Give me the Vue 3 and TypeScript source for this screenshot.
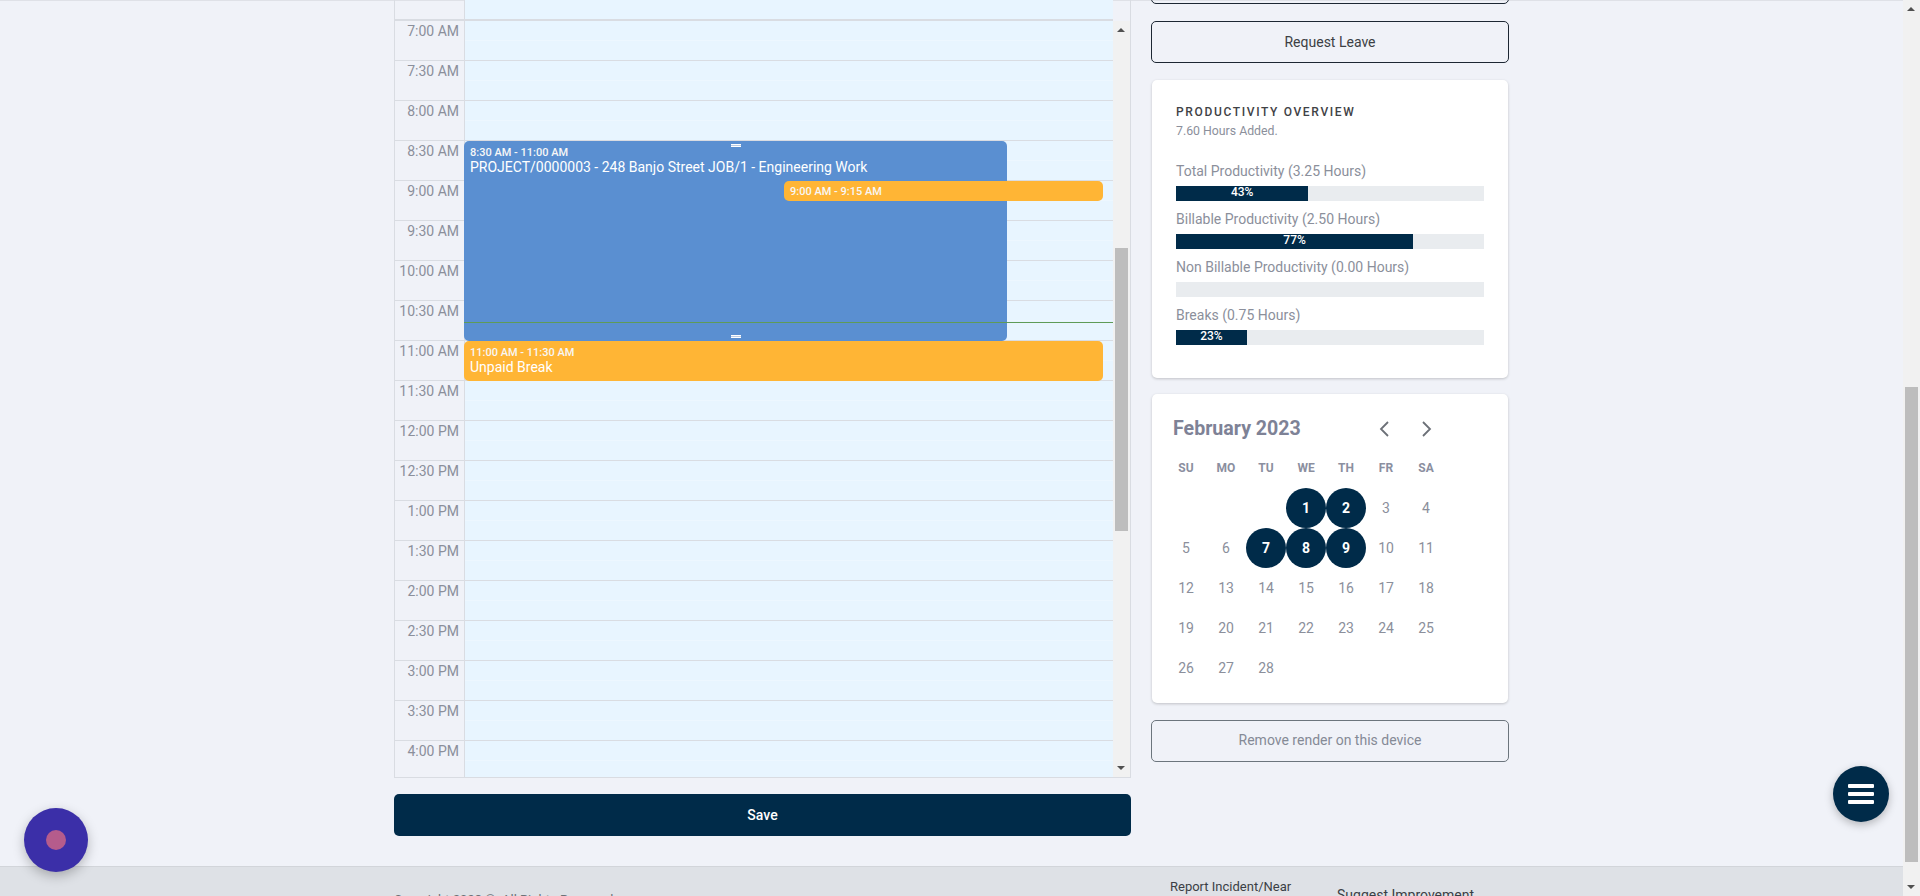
<script setup lang="ts">
const times: string[] = [];
const hours = [7, 8, 9, 10, 11, 12, 1, 2, 3, 4];
for (const h of hours) {
  const suffix = h >= 7 && h < 12 ? 'AM' : 'PM';
  times.push(`${h}:00 ${suffix}`);
  if (h !== 4) times.push(`${h}:30 ${suffix}`);
}
const bars = [
  { label: 'Total Productivity (3.25 Hours)', pct: 43 },
  { label: 'Billable Productivity (2.50 Hours)', pct: 77 },
  { label: 'Non Billable Productivity (0.00 Hours)', pct: 0 },
  { label: 'Breaks (0.75 Hours)', pct: 23 },
];
const dow = ['SU', 'MO', 'TU', 'WE', 'TH', 'FR', 'SA'];
const blanks = [0, 1, 2];
const days = Array.from({ length: 28 }, (_, i) => i + 1);
const selected = [1, 2, 7, 8, 9];
</script>

<template>
  <div class="shell">
    <div class="main">
      <div class="content">
        <div class="left">
          <div class="frame">
            <div class="head">
              <div class="head-time"></div>
              <div class="head-lane"></div>
              <div class="head-gutter"></div>
            </div>
            <div class="body">
              <div class="rows">
                <div v-for="t in times" :key="t" class="row">
                  <div class="time">{{ t }}</div>
                  <div class="lane">
                    <div class="slot"></div>
                    <div class="slot"></div>
                  </div>
                </div>
                <div class="event blue">
                  <span class="handle handle-top"></span>
                  <div class="ev-time">8:30 AM - 11:00 AM</div>
                  <div class="ev-title">PROJECT/0000003 - 248 Banjo Street JOB/1 - Engineering Work</div>
                  <span class="handle handle-bottom"></span>
                </div>
                <div class="now"></div>
                <div class="event orange small">
                  <div class="ev-time">9:00 AM - 9:15 AM</div>
                </div>
                <div class="event orange brk">
                  <div class="ev-time">11:00 AM - 11:30 AM</div>
                  <div class="ev-title">Unpaid Break</div>
                </div>
              </div>
              <div class="scrollbar inner">
                <span class="arrow up"></span>
                <span class="thumb inner-thumb"></span>
                <span class="arrow down"></span>
              </div>
            </div>
          </div>
          <button class="save" type="button">Save</button>
        </div>

        <div class="right">
          <button class="outline stub" type="button"></button>
          <button class="outline" type="button">Request Leave</button>

          <section class="card prod">
            <h3 class="prod-title">PRODUCTIVITY OVERVIEW</h3>
            <p class="prod-sub">7.60 Hours Added.</p>
            <div class="bars">
              <div v-for="b in bars" :key="b.label" class="bar-item">
                <div class="bar-label">{{ b.label }}</div>
                <div class="track">
                  <div v-if="b.pct" class="fill" :style="{ width: b.pct + '%' }">{{ b.pct }}%</div>
                </div>
              </div>
            </div>
          </section>

          <section class="card cal">
            <div class="cal-head">
              <span class="month">February 2023</span>
              <span class="navs">
                <svg class="chev" viewBox="0 0 10 16" width="10" height="16"><path d="M9 1 L2 8 L9 15" /></svg>
                <svg class="chev" viewBox="0 0 10 16" width="10" height="16"><path d="M1 1 L8 8 L1 15" /></svg>
              </span>
            </div>
            <div class="grid">
              <div v-for="d in dow" :key="d" class="dow">{{ d }}</div>
              <div v-for="b in blanks" :key="'b' + b" class="day"></div>
              <div v-for="d in days" :key="d" class="day" :class="{ sel: selected.includes(d) }">{{ d }}</div>
            </div>
          </section>

          <button class="outline muted" type="button">Remove render on this device</button>
        </div>
      </div>

      <footer class="footer">
        <div class="copy">Copyright 2023 ©. All Rights Reserved</div>
        <div class="flink report">Report Incident/Near Miss</div>
        <div class="flink suggest">Suggest Improvement</div>
      </footer>
    </div>

    <div class="scrollbar page">
      <span class="arrow up"></span>
      <span class="thumb page-thumb"></span>
      <span class="arrow down"></span>
    </div>

    <div class="bubble"><span class="bubble-dot"></span></div>
    <div class="fab">
      <span class="fab-bar"></span>
      <span class="fab-bar"></span>
      <span class="fab-bar"></span>
    </div>
  </div>
</template>

<style>
html, body { margin: 0; overflow: hidden; }
</style>

<style scoped>
* { box-sizing: border-box; }
.shell {
  position: relative;
  display: flex;
  width: 1920px;
  height: 896px;
  overflow: hidden;
  font-family: Roboto, "Liberation Sans", sans-serif;
  background: #f0f2f8;
}
.main {
  flex: 1;
  min-width: 0;
  display: flex;
  flex-direction: column;
  border-top: 1px solid #dfe1e7;
}
.content {
  height: 865px;
  flex: none;
  display: flex;
  gap: 20px;
  padding-left: 394px;
}
.left {
  width: 737px;
  margin-top: -1px;
  display: flex;
  flex-direction: column;
}
.frame {
  height: 778px;
  display: flex;
  flex-direction: column;
  border-left: 1px solid #d9dce2;
  border-right: 1px solid #d9dce2;
  border-bottom: 1px solid #d9dce2;
  overflow: hidden;
}
.head {
  height: 21px;
  flex: none;
  display: flex;
}
.head-time {
  width: 70px;
  border-right: 1px solid #d9dce2;
  border-bottom: 2px solid #d9dce2;
}
.head-lane {
  flex: 1;
  background: #e8f5ff;
  border-bottom: 2px solid #d9dce2;
}
.head-gutter { width: 17px; }
.body {
  flex: 1;
  min-height: 0;
  display: flex;
}
.rows {
  position: relative;
  flex: 1;
  min-width: 0;
}
.row {
  height: 40px;
  display: flex;
}
.time {
  width: 70px;
  flex: none;
  padding: 2px 5px 0 0;
  text-align: right;
  font-size: 14px;
  line-height: 17px;
  color: #8b8f9b;
  border-right: 1px solid #d9dce2;
  border-bottom: 1px solid #d9dce2;
}
.lane {
  flex: 1;
  display: flex;
  flex-direction: column;
  background: #e8f5ff;
  border-bottom: 1px solid #d9dce2;
}
.slot { flex: 1; }
.slot:first-child { border-bottom: 1px solid #edf7ff; }
.event {
  position: absolute;
  border-radius: 5px;
  color: #fff;
  padding: 5px 6px;
  overflow: hidden;
}
.blue {
  left: 69px;
  top: 120px;
  width: 543px;
  height: 200px;
  background: #5a8fd1;
}
.orange { background: #ffb535; }
.small {
  left: 389px;
  top: 160px;
  width: 319px;
  height: 20px;
  padding-top: 4px;
}
.brk {
  left: 69px;
  top: 320px;
  width: 639px;
  height: 40px;
}
.ev-time {
  font-size: 11px;
  line-height: 13px;
  font-weight: 500;
  color: #f7f7f7;
}
.ev-title {
  font-size: 14px;
  line-height: 16px;
  font-weight: 400;
}
.handle {
  position: absolute;
  left: 50%;
  width: 10px;
  height: 3px;
  margin-left: -5px;
  border-top: 1px solid #fff;
  border-bottom: 1px solid #fff;
  background: #b9cbe4;
}
.handle-top { top: 3px; }
.handle-bottom { bottom: 3px; }
.now {
  position: absolute;
  left: 69px;
  right: 0;
  top: 301px;
  height: 1px;
  background: #5f9b57;
}
.scrollbar {
  position: relative;
  width: 17px;
  flex: none;
  background: #f1f1f1;
}
.arrow {
  position: absolute;
  left: 4px;
  width: 0;
  height: 0;
  border-left: 4px solid transparent;
  border-right: 4px solid transparent;
}
.arrow.up {
  top: 7px;
  border-bottom: 4px solid #505050;
}
.arrow.down {
  bottom: 7px;
  border-top: 4px solid #505050;
}
.thumb {
  position: absolute;
  left: 2px;
  width: 13px;
  background: #bdbdbd;
}
.inner-thumb {
  top: 227px;
  height: 283px;
}
.page-thumb {
  top: 387px;
  height: 475px;
}
.save {
  margin-top: 16px;
  height: 42px;
  padding: 0 0 1px;
  border: 0;
  border-radius: 5px;
  background: #002b49;
  color: #fff;
  font: 500 14px Roboto, "Liberation Sans", sans-serif;
}
.right {
  width: 358px;
  display: flex;
  flex-direction: column;
  gap: 16.6px;
  margin-top: -39px;
}
.outline {
  height: 42px;
  flex: none;
  padding: 0;
  background: transparent;
  border: 1px solid #1d2733;
  border-radius: 5px;
  color: #3c3f44;
  font: 400 14px Roboto, "Liberation Sans", sans-serif;
}
.stub { height: 42.4px; }
.muted {
  padding-bottom: 1px;
  border-color: #6c757d;
  color: #858a96;
}
.card {
  margin: 0 1px;
  background: #fff;
  border-radius: 5px;
  box-shadow: 0 1px 3px rgba(0, 0, 0, 0.2);
}
.prod {
  height: 298px;
  padding: 25px 24px 0;
}
.prod-title {
  margin: 0;
  font-size: 12px;
  line-height: 14px;
  font-weight: 500;
  letter-spacing: 1.65px;
  color: #3f4246;
}
.prod-sub {
  margin: 4px 0 0;
  font-size: 12.3px;
  line-height: 16px;
  color: #8b8f9b;
}
.bars { margin-top: 22px; }
.bar-item {
  height: 48px;
}
.bar-label {
  font-size: 14px;
  line-height: 21px;
  height: 25px;
  color: #8b8f9b;
}
.track {
  height: 15px;
  background: #e9ecef;
}
.fill {
  height: 15px;
  background: #002b49;
  color: #fff;
  font-size: 12px;
  font-weight: 500;
  line-height: 12px;
  text-align: center;
}
.cal {
  height: 309px;
  padding: 20px 14px 0;
}
.cal-head {
  display: flex;
  align-items: center;
  height: 28px;
  padding-left: 7px;
}
.month {
  font-size: 19.6px;
  font-weight: 700;
  color: #7e8296;
}
.navs {
  margin-left: 78px;
  display: flex;
  gap: 33px;
  padding-top: 2px;
}
.chev {
  display: block;
  fill: none;
  stroke: #6c7077;
  stroke-width: 1.8;
}
.grid {
  margin-top: 6px;
  width: 280px;
  display: grid;
  grid-template-columns: repeat(7, 40px);
  grid-auto-rows: 40px;
}
.dow {
  display: flex;
  align-items: center;
  justify-content: center;
  font-size: 12px;
  font-weight: 700;
  color: #8b8f9f;
}
.day {
  display: flex;
  align-items: center;
  justify-content: center;
  font-size: 14px;
  color: #8b8f9b;
  border-radius: 50%;
}
.day.sel {
  background: #002b49;
  color: #fff;
  font-weight: 700;
}
.footer {
  flex: 1;
  min-height: 0;
  display: flex;
  align-items: flex-start;
  padding: 9px 0 0 394px;
  background: #dee1e6;
  border-top: 1px solid #d2d5da;
  line-height: 21px;
}
.copy {
  width: 776px;
  padding-top: 13px;
  font-size: 13px;
  color: #6d7177;
}
.flink {
  color: #3b3f45;
}
.report {
  width: 135px;
  margin-right: 32px;
  font-size: 13px;
}
.suggest {
  width: 167px;
  padding-top: 9px;
  font-size: 14px;
}
.bubble {
  position: absolute;
  left: 24px;
  top: 808px;
  width: 64px;
  height: 64px;
  border-radius: 50%;
  background: #3b2fa8;
  box-shadow: 0 4px 12px rgba(0, 0, 0, 0.25);
  display: flex;
  align-items: center;
  justify-content: center;
}
.bubble-dot {
  width: 20px;
  height: 20px;
  border-radius: 50%;
  background: #b55c8c;
}
.fab {
  position: absolute;
  left: 1833px;
  top: 766px;
  width: 56px;
  height: 56px;
  border-radius: 50%;
  background: #002b49;
  box-shadow: 0 3px 8px rgba(0, 0, 0, 0.25);
  display: flex;
  flex-direction: column;
  align-items: center;
  justify-content: center;
  gap: 4px;
}
.fab-bar {
  width: 26px;
  height: 4px;
  background: #fff;
  border-radius: 1px;
}
</style>
